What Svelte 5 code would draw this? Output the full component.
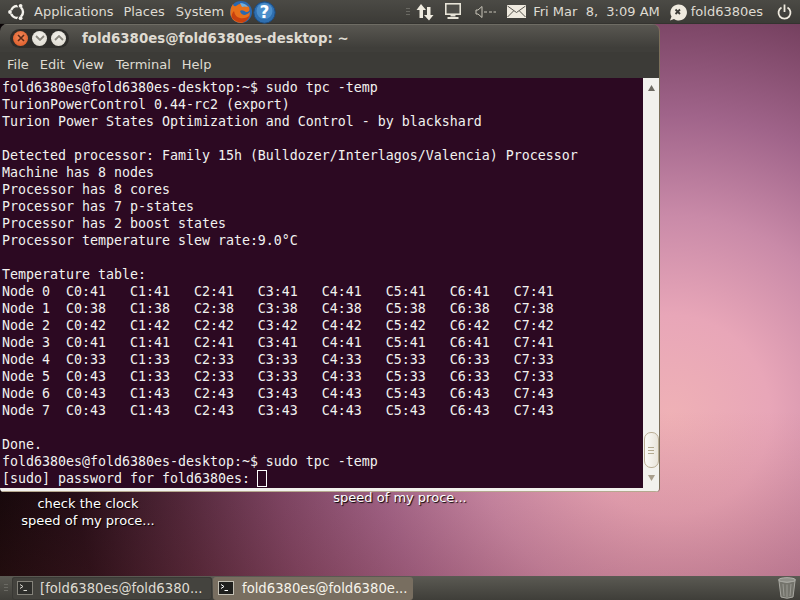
<script>
  const temps = [
    [41,41,41,41,41,41,41,41],[38,38,38,38,38,38,38,38],[42,42,42,42,42,42,42,42],[41,41,41,41,41,41,41,41],
    [33,33,33,33,33,33,33,33],[43,33,33,33,33,33,33,33],[43,43,43,43,43,43,43,43],[43,43,43,43,43,43,43,43]
  ];
  const rows = temps.map((r, n) => `Node ${n}  ` + r.map((t, c) => `C${c}:${t}`).join('   '));
  const lines = [
    'fold6380es@fold6380es-desktop:~$ sudo tpc -temp',
    'TurionPowerControl 0.44-rc2 (export)',
    'Turion Power States Optimization and Control - by blackshard',
    '',
    'Detected processor: Family 15h (Bulldozer/Interlagos/Valencia) Processor',
    'Machine has 8 nodes',
    'Processor has 8 cores',
    'Processor has 7 p-states',
    'Processor has 2 boost states',
    'Processor temperature slew rate:9.0°C',
    '',
    'Temperature table:',
    ...rows,
    '',
    'Done.',
    'fold6380es@fold6380es-desktop:~$ sudo tpc -temp'
  ];
  const menus = ['File', 'Edit', 'View', 'Terminal', 'Help'];
</script>

<div class="screen">
  <header class="top">
    <div class="left">
      <svg class="logo" width="20" height="20" viewBox="0 0 20 20">
        <circle cx="10" cy="10" r="6" fill="none" stroke="#f4f2ec" stroke-width="2.4" />
        <g fill="#3f3e3a"><rect x="1" y="8.4" width="5" height="3.2" /><rect x="10.5" y="1" width="3" height="5" transform="rotate(-28 12 3.5)" /><rect x="10.5" y="14" width="3" height="5" transform="rotate(28 12 16.5)" /></g>
        <circle cx="3" cy="10" r="1.9" fill="#f4f2ec" /><circle cx="13.6" cy="3.8" r="1.9" fill="#f4f2ec" /><circle cx="13.6" cy="16.2" r="1.9" fill="#f4f2ec" />
      </svg>
      <span class="m">Applications</span><span class="m places">Places</span><span class="m">System</span>
      <svg class="fx" width="24" height="24" viewBox="0 0 24 24">
        <circle cx="12" cy="12" r="11" fill="#2a68b0" />
        <path d="M7 6 Q13 1 20 7 Q22 12 17 12 Q13 9 11 11 Q12 15 16 15 Q19 14 21 12 Q21 20 13 23 Q4 23 1.500 15 Q0.500 9 4 4 Q4.500 7 7 6Z" fill="#e8701a" />
        <path d="M3 18 Q8 23 14 22.500 Q19 21 21 15 Q17 19 11 18 Q6 17 5 11 Q2 14 3 18Z" fill="#c8410f" />
        <path d="M11 3 Q16 3 19 7 Q15 6 13 7Z" fill="#6fb0e0" />
      </svg>
      <svg class="help" width="23" height="23" viewBox="0 0 23 23">
        <circle cx="11.500" cy="11.500" r="10.700" fill="#2f6fb0" stroke="#1d4c80" />
        <circle cx="11.500" cy="10" r="8" fill="#4b8ecb" />
        <text x="11.500" y="17" text-anchor="middle" class="q">?</text>
      </svg>
    </div>
    <div class="right">
      <span class="grip"></span>
      <svg class="net" width="18" height="20" viewBox="0 0 18 20"><path d="M5 2 L10 8 H7 V16 H3.500 V8 H0.500Z M13 18.500 L8 13 H11 V5 H14.500 V13 H17.500Z" fill="#f0ece0" /></svg>
      <svg class="mon" width="16" height="16" viewBox="0 0 16 16"><rect x="0.800" y="0.800" width="14.400" height="10.400" fill="none" stroke="#e8e4d8" stroke-width="1.600" /><rect x="2" y="2" width="12" height="8" fill="#4e4d48" /><rect x="5.500" y="12" width="5" height="1.500" fill="#e8e4d8" /><rect x="2.500" y="14" width="11" height="2" fill="#e8e4d8" /></svg>
      <svg class="vol" width="21" height="14" viewBox="0 0 21 14"><path d="M1 5 H3 L7 1.500 V12.500 L3 9 H1Z" fill="none" stroke="#c9c5b9" /><path d="M9 7 H12 M14 7 H17 M18.500 7 H21" stroke="#c9c5b9" /></svg>
      <svg class="mail" width="19" height="13" viewBox="0 0 19 13"><rect width="19" height="13" fill="#efeadf" /><path d="M0.500 1 L9.500 7.500 L18.500 1 M0.500 12 L6.500 6 M18.500 12 L12.500 6" fill="none" stroke="#55534d" stroke-width="1" /></svg>
      <span class="clock">Fri Mar  8,  3:09 AM</span>
      <svg class="chat" width="18" height="17" viewBox="0 0 18 17"><path d="M9 0.500 A8.200 8 0 1 1 5 15 L1 16.500 L2.500 12.500 A8.200 8 0 0 1 9 0.500Z" fill="#efeadf" /><path d="M6.500 5.500 L11 10 M11 5.500 L6.500 10" stroke="#3c3b37" stroke-width="1.800" /></svg>
      <span class="user">fold6380es</span>
      <svg class="pow" width="15" height="16" viewBox="0 0 15 16"><path d="M4.500 3.500 A6 6 0 1 0 10.500 3.500" fill="none" stroke="#efeadf" stroke-width="1.800" /><path d="M7.500 0.500 V8" stroke="#efeadf" stroke-width="1.800" /></svg>
    </div>
  </header>

  <main class="desktop">
    <div class="label one">check the clock<br />speed of my proce...</div>
    <div class="label two">speed of my proce...</div>

    <section class="win">
      <div class="title">
        <div class="btns">
          <span class="b close"><svg width="8" height="8" viewBox="0 0 8 8"><path d="M1 1 L7 7 M7 1 L1 7" stroke="#5a2a18" stroke-width="1.600" /></svg></span>
          <span class="b"><svg width="10" height="6" viewBox="0 0 10 6"><path d="M1 1 L5 5 L9 1" fill="none" stroke="#8a877e" stroke-width="1.800" /></svg></span>
          <span class="b"><svg width="10" height="6" viewBox="0 0 10 6"><path d="M1 5 L5 1 L9 5" fill="none" stroke="#8a877e" stroke-width="1.800" /></svg></span>
        </div>
        <span class="ttext">fold6380es@fold6380es-desktop: ~</span>
      </div>
      <nav class="menu">{#each menus as m}<span>{m}</span>{/each}</nav>
      <div class="body">
        <pre class="term">{#each lines as l}<div class="ln">{l}</div>{/each}<div class="ln">[sudo] password for fold6380es: <span class="cur"></span></div></pre>
        <div class="sb">
          <svg class="arr" width="7" height="6" viewBox="0 0 7 6"><path d="M3.500 0 L7 6 H0Z" fill="#6e6b63" /></svg>
          <div class="track"></div>
          <div class="thumb"><i></i><i></i><i></i></div>
          <svg class="arr dn" width="7" height="6" viewBox="0 0 7 6"><path d="M3.500 6 L7 0 H0Z" fill="#a89e8c" /></svg>
        </div>
      </div>
      <div class="foot"></div>
    </section>
  </main>

  <footer class="bottom">
    <span class="grip g2"></span>
    <div class="task">
      <svg width="16" height="14" viewBox="0 0 16 14"><rect x="0.500" y="0.500" width="15" height="13" fill="#2e2e2b" stroke="#85837b" /><path d="M3 3.500 L6 5.500 L3 7.500 M6.500 9.500 H10" fill="none" stroke="#d8d6cf" /></svg>
      <span>[fold6380es@fold6380...</span>
    </div>
    <div class="task active">
      <svg width="16" height="14" viewBox="0 0 16 14"><rect x="0.500" y="0.500" width="15" height="13" fill="#1f1f1d" stroke="#c4c0b4" /><path d="M3 3.500 L6 5.500 L3 7.500 M6.500 9.500 H10" fill="none" stroke="#fff" /></svg>
      <span>fold6380es@fold6380e...</span>
    </div>
    <svg class="trash" width="18" height="22" viewBox="0 0 18 22">
      <ellipse cx="9" cy="3" rx="8.500" ry="2.300" fill="#8f8f88" stroke="#b5b5ae" />
      <path d="M1 4 L3 20 Q9 22.500 15 20 L17 4 Q9 7 1 4Z" fill="#74746c" stroke="#a7a7a0" />
      <path d="M5 7 L6 19 M9 7.500 V20 M13 7 L12 19" stroke="#9a9a93" />
    </svg>
  </footer>
</div>

<style>
  :global(body) { margin: 0; }
  .screen {
    width: 800px; height: 600px; overflow: hidden;
    display: flex; flex-direction: column;
    font-family: "DejaVu Sans", sans-serif; font-size: 13px;
  }
  .top {
    height: 24px; flex: none; display: flex; justify-content: space-between; align-items: center;
    background: linear-gradient(#4b4a45, #3b3a36);
    color: #dfdbd2; box-shadow: inset 0 -1px 0 #34332f;
  }
  .left, .right { display: flex; align-items: center; height: 24px; }
  .logo { margin-left: 7px; margin-right: 7px; }
  .m { margin-right: 10px; margin-top: -2px; }
  .places { margin-right: 11px; }
  .fx { margin-left: -5px; flex: none; }
  .help { flex: none; }
  .grip { width: 4px; height: 8px; background: repeating-linear-gradient(#6a6963 0 1px, transparent 1px 3px); }
  .right .grip { margin-right: 6px; }
  .net { margin-right: 11px; }
  .mon { margin-right: 14px; margin-top: -3px; }
  .vol { margin-right: 11px; margin-top: -1px; }
  .mail { margin-right: 7px; margin-top: -1px; }
  .clock { white-space: pre; margin-right: 9px; margin-top: -2px; }
  .chat { margin-right: 4px; }
  .user { margin-right: 14px; margin-top: -2px; }
  .pow { margin-right: 8px; margin-top: -1px; }
  .q { font: bold 17px "DejaVu Sans", sans-serif; fill: #fff; }

  .desktop {
    flex: 1; position: relative; overflow: hidden;
    background:
      linear-gradient(to bottom, rgba(130, 50, 50, 0) 70%, rgba(130, 50, 50, 0.2)),
      radial-gradient(circle 700px at 670px 391px,
        #efb1b6 0, #e8a6b8 100px, #c98aa8 200px, #a0648a 300px, #7a4464 400px, #4a2438 500px, #1c0a14 600px, #090305 690px);
  }
  .label {
    position: absolute; width: 170px; text-align: center; color: #fff; line-height: 17px;
    text-shadow: 1px 1px 1px #000;
  }
  .one { left: 3px; top: 471px; }
  .one::before {
    content: ""; position: absolute; left: 91px; top: -4px; width: 3px; height: 1px;
    background: #d8d4d0; box-shadow: 31px 0 0 #d8d4d0;
  }
  .two { left: 315px; top: 465px; }
  .win {
    position: absolute; left: 0; top: 0; width: 659px; height: 468px;
    display: flex; flex-direction: column;
    border-radius: 7px 7px 4px 4px; overflow: hidden;
    box-shadow: 1px 0 0 #7b6f5a;
  }
  .title {
    height: 28px; flex: none; display: flex; align-items: center;
    background: linear-gradient(#5a5852, #3f3e3a 85%);
    box-shadow: inset 0 1px 0 #6e6c64;
  }
  .btns {
    margin-left: 10px; width: 59px; height: 19px; border-radius: 10px;
    background: #2e2d2a; display: flex; justify-content: space-between; align-items: center;
    padding: 0 3px; box-sizing: border-box;
  }
  .b {
    width: 15px; height: 15px; border-radius: 50%;
    background: radial-gradient(circle at 50% 35%, #f5f3ee, #d8d4c9);
    display: flex; align-items: center; justify-content: center;
  }
  .close { background: radial-gradient(circle at 50% 40%, #f48a5c, #d9531e); }
  .ttext { margin-left: 13px; font-weight: bold; font-size: 13.33px; color: #dfdbd2; }
  .menu {
    height: 26px; flex: none; background: #3c3b37; color: #dfdbd2; box-sizing: border-box;
    display: flex; align-items: center; padding: 0 0 2px 7px; gap: 11px;
  }
  .menu span:nth-child(2) { margin-right: -3px; }
  .menu span:nth-child(3) { margin-right: 1px; }
  .body { flex: 1; display: flex; min-height: 0; }
  .term {
    flex: 1; margin: 0; background: #2c0922; color: #f2f2f0; padding: 1px 0 0 2px;
    font: 13.29px/17px "DejaVu Sans Mono", monospace; overflow: hidden;
  }
  .ln { height: 17px; white-space: pre; }
  .cur {
    display: inline-block; width: 8px; height: 15px; border: 1px solid #fff;
    vertical-align: top; margin-left: -1px;
  }
  .sb {
    width: 16px; flex: none; background: #f2f1ed; display: flex; flex-direction: column;
    align-items: center; padding: 7px 0; box-sizing: border-box;
  }
  .track { flex: 1; }
  .arr { flex: none; }
  .dn { margin-top: 7px; }
  .thumb {
    width: 15px; height: 36px; box-sizing: border-box; border: 1px solid #b9ad94; border-radius: 7px;
    background: linear-gradient(90deg, #fbfaf7, #e9e5db);
    display: flex; flex-direction: column; align-items: center; justify-content: center; gap: 2px;
  }
  .thumb i { width: 6px; height: 1px; background: #b3a990; }
  .foot {
    height: 4px; flex: none; background: #f2f1ed; border-bottom: 1px solid #b5a88f; box-sizing: border-box;
  }
  .bottom {
    height: 24px; flex: none; display: flex; align-items: center;
    background: linear-gradient(#5b5a53, #3f3e39);
    color: #dfdbd2; gap: 1px;
  }
  .g2 { margin-left: 4px; margin-right: 3px; }
  .task {
    width: 200px; height: 23px; box-sizing: border-box; border-radius: 3px;
    display: flex; align-items: center; gap: 7px; padding-left: 5px; background: #44433e;
    box-shadow: inset 0 0 0 1px #3a3935; white-space: nowrap; overflow: hidden; flex: none; font-size: 13.2px;
  }
  .active { background: #786e60; color: #f6f3ea; box-shadow: none; gap: 8px; }
  .trash { margin-left: auto; margin-right: 4px; flex: none; }
</style>
